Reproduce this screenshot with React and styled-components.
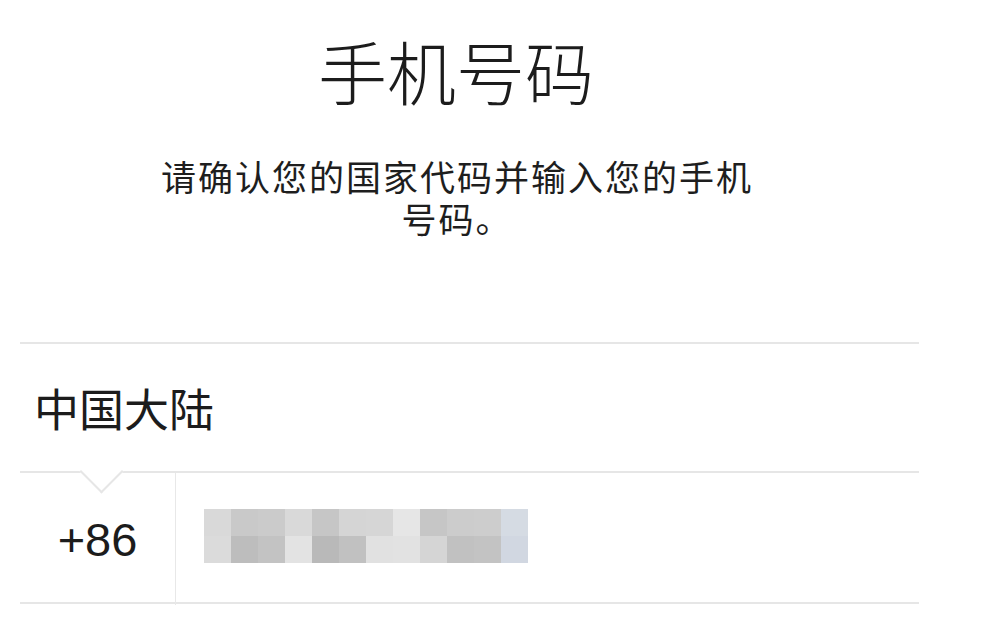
import React from "react";
import styled, { createGlobalStyle } from "styled-components";

const GlobalStyle = createGlobalStyle`
  html, body {
    margin: 0;
    padding: 0;
    background: #ffffff;
  }
  body {
    font-family: "Noto Sans CJK SC", "Noto Sans", sans-serif;
    color: #1a1a1a;
  }
`;

const Page = styled.div`
  width: 1003px;
  height: 622px;
  overflow: hidden;
  padding: 36px 0 0 20px;
  box-sizing: border-box;
  background: #ffffff;
`;

const Header = styled.header`
  width: 872px;
  display: flex;
  flex-direction: column;
  align-items: center;
`;

const Title = styled.h1`
  margin: 0;
  font-size: 69px;
  line-height: 69px;
  font-weight: 300;
  color: #1c1c1c;
  letter-spacing: 0;
`;

const Subtitle = styled.p`
  margin: 50px 0 0;
  width: 608px;
  padding-left: 2px;
  box-sizing: border-box;
  text-align: center;
  font-size: 35px;
  line-height: 42px;
  letter-spacing: 2px;
  font-weight: 400;
  color: #1e1e1e;
`;

const List = styled.div`
  margin-top: 103px;
  width: 899px;
  border-top: 2px solid #e6e6e6;
`;

const CountryRow = styled.div`
  height: 127px;
  display: flex;
  align-items: center;
  padding-left: 14px;
  font-size: 45px;
  font-weight: 400;
  color: #1c1c1c;
  border-bottom: 2px solid #e6e6e6;
`;

const PhoneRow = styled.div`
  position: relative;
  height: 129px;
  display: flex;
  align-items: stretch;
  border-bottom: 2px solid #e6e6e6;
`;

const Notch = styled.span`
  position: absolute;
  left: 66px;
  top: -17px;
  width: 31px;
  height: 31px;
  background: #ffffff;
  border-right: 2px solid #e6e6e6;
  border-bottom: 2px solid #e6e6e6;
  transform: rotate(45deg);
  box-sizing: border-box;
`;

const CodeCell = styled.div`
  width: 155px;
  display: flex;
  align-items: center;
  justify-content: center;
  border-right: 1px solid #e8e8e8;
  margin-bottom: -3px;
  font-family: "Liberation Sans", Arial, sans-serif;
  font-size: 47px;
  color: #1c1c1c;
`;

const InputCell = styled.div`
  flex: 1;
  display: flex;
  align-items: center;
  padding-left: 28px;
`;

const Mosaic = styled.div`
  display: grid;
  grid-template-columns: repeat(12, 27px);
  grid-template-rows: repeat(2, 27px);
  margin-top: -3px;
`;

const Pixel = styled.span`
  display: block;
  background: ${(p) => p.$c};
`;

const mosaic = [
  "#d9d9d9", "#c9c9c9", "#cbcbcb", "#d9d9d9", "#c6c6c6", "#d5d5d5",
  "#d6d6d6", "#e6e6e6", "#c6c6c6", "#cccccc", "#cdcdcd", "#d5dbe3",
  "#dbdbdb", "#bdbdbd", "#c3c3c3", "#e3e3e3", "#b9b9b9", "#c1c1c1",
  "#e1e1e1", "#e2e2e2", "#d5d5d5", "#c1c1c1", "#c3c3c3", "#d1d7e1",
];

export default function App() {
  return (
    <>
      <GlobalStyle />
      <Page>
        <Header>
          <Title>手机号码</Title>
          <Subtitle>请确认您的国家代码并输入您的手机号码。</Subtitle>
        </Header>
        <List>
          <CountryRow>中国大陆</CountryRow>
          <PhoneRow>
            <Notch />
            <CodeCell>+86</CodeCell>
            <InputCell>
              <Mosaic>
                {mosaic.map((c, i) => (
                  <Pixel key={i} $c={c} />
                ))}
              </Mosaic>
            </InputCell>
          </PhoneRow>
        </List>
      </Page>
    </>
  );
}
